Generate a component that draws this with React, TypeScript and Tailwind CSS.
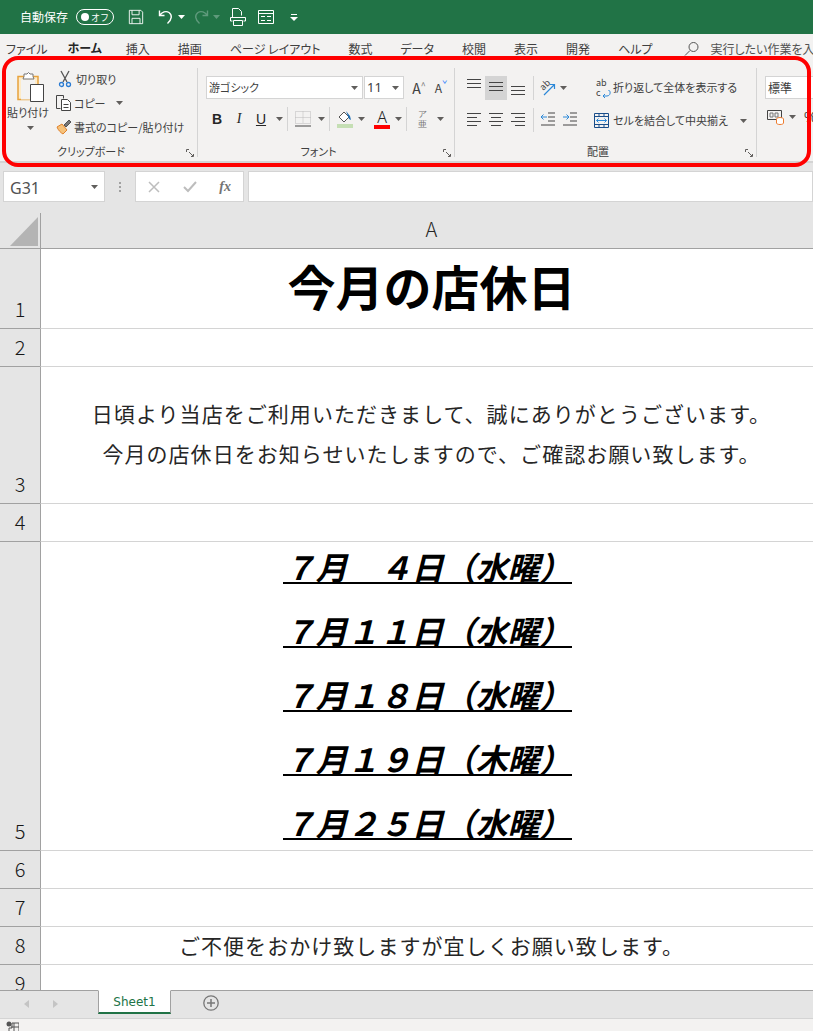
import type { ReactNode } from "react";

const tabs = ["描画", "ページ レイアウト", "数式", "データ", "校閲", "表示", "開発", "ヘルプ"];

const dates = [
  "７月　４日（水曜）",
  "７月１１日（水曜）",
  "７月１８日（水曜）",
  "７月１９日（木曜）",
  "７月２５日（水曜）",
];

function Caret({ color = "#605e5c" }: { color?: string }) {
  return (
    <svg width="7" height="4" viewBox="0 0 7 4" className="shrink-0">
      <path d="M0 0h7L3.500 4z" fill={color} />
    </svg>
  );
}

function Launcher() {
  return (
    <svg width="8" height="8" viewBox="0 0 8 8" className="absolute right-1 bottom-1" fill="none" stroke="#605e5c">
      <path d="M.5 3V.5H3M7.500 5v2.500H5M3 3l4 4" />
    </svg>
  );
}

function Sep() {
  return <div className="mx-1 h-6 w-px shrink-0 bg-neutral-300" />;
}

function Lines({ rows }: { rows: [number, number, number][] }) {
  return (
    <svg width="16" height="24" viewBox="0 0 16 24" stroke="#444" strokeWidth="1">
      {rows.map(([x1, x2, y]) => (
        <line key={y} x1={x1} x2={x2} y1={y + 0.5} y2={y + 0.5} />
      ))}
    </svg>
  );
}

function IconBtn({ active, children }: { active?: boolean; children: ReactNode }) {
  return (
    <div className={"flex h-6 w-5.5 shrink-0 items-center justify-center " + (active ? "bg-neutral-300" : "")}>{children}</div>
  );
}

function Group({ label, width, children }: { label: string; width: string; children: ReactNode }) {
  return (
    <div className={"relative flex h-full shrink-0 flex-col " + width}>
      <div className="min-h-0 flex-1">{children}</div>
      <div className="pr-4 pb-0.5 text-center leading-4 text-neutral-700">{label}</div>
      <Launcher />
      <div className="absolute top-2 right-0 bottom-1 w-px bg-neutral-300" />
    </div>
  );
}

function PasteIcon() {
  return (
    <svg width="28" height="30" viewBox="0 0 28 30" fill="none" className="ml-1.5">
      <path d="M1 4.500h20v23H1z" fill="#fdebc8" stroke="#e8a33d" strokeWidth="1.500" />
      <path d="M4 7.500h14v20H4z" fill="#f3f2f1" />
      <path d="M7 4.500V2h3l1.500-1.500L13 2h3v2.500l1 2.500H6z" fill="#fff" stroke="#777" />
      <path d="M13.500 12.500h13v17h-13z" fill="#fff" stroke="#444" />
    </svg>
  );
}

function Scissors() {
  return (
    <svg width="14" height="18" viewBox="0 0 14 18" fill="none">
      <path d="M3 1l6 11M11 1L5 12" stroke="#555" strokeWidth="1.300" />
      <circle cx="3.500" cy="14.500" r="2" stroke="#2b7cd3" strokeWidth="1.300" />
      <circle cx="10.500" cy="14.500" r="2" stroke="#2b7cd3" strokeWidth="1.300" />
    </svg>
  );
}

function CopyIcon() {
  return (
    <svg width="16" height="16" viewBox="0 0 16 16" fill="none" stroke="#444">
      <path d="M4.500 13.500h-4V.5h7v3" />
      <path d="M5.500 4.500h6l3 3v8h-9zM7.500 9.500h5M7.500 12.500h5" fill="#fff" />
    </svg>
  );
}

function PainterIcon() {
  return (
    <svg width="16" height="16" viewBox="0 0 16 16" fill="none">
      <path d="M1 8l5-3 5 6-4 4C5 14 2 11 1 8z" fill="#f6c27a" stroke="#e0822d" />
      <path d="M8 6l5-5 2 2-5 5z" fill="#777" stroke="#555" />
    </svg>
  );
}

function Row({ num, height, children }: { num: number; height: string; children?: ReactNode }) {
  return (
    <div className={"flex shrink-0 " + height}>
      <div className="flex w-10 shrink-0 items-end justify-center border-b border-neutral-400 bg-neutral-200 pb-px text-xl leading-9 font-light text-neutral-900">
        {num}
      </div>
      <div className="w-[782px] shrink-0 border-b border-l border-b-neutral-300 border-l-neutral-400 bg-white">{children}</div>
    </div>
  );
}

export default function App() {
  return (
    <div className="relative flex h-screen flex-col overflow-hidden bg-neutral-200 font-['Noto_Sans_CJK_JP','Noto_Sans',sans-serif]">
      {/* タイトルバー */}
      <div className="flex h-[34px] shrink-0 items-center bg-[#217346] pl-5 text-white">
        <span className="text-xs [font-feature-settings:'palt']">自動保存</span>
        <div className="ml-2 flex h-4 w-9.5 items-center justify-between rounded-full border border-white px-1">
          <div className="size-2 rounded-full bg-white" />
          <span className="text-[9px] leading-none">オフ</span>
        </div>
        <svg width="16" height="16" viewBox="0 0 18 18" fill="none" stroke="#fff" className="ml-3.5">
          <path d="M1.500 1.500h13l2 2v13h-15zM4.500 1.500v5h8v-5M4.500 16.500v-6h9v6" />
        </svg>
        <svg width="16" height="16" viewBox="0 0 16 16" fill="none" stroke="#fff" strokeWidth="1.400" className="ml-3.5">
          <path d="M1.500 1.500v5h5M1.500 6.500C4 3 8 1.500 11 3.500c3.500 2.500 3 7-1.500 11" />
        </svg>
        <div className="ml-1">
          <Caret color="#ffffff" />
        </div>
        <svg width="16" height="16" viewBox="0 0 16 16" fill="none" stroke="#5f9a7c" strokeWidth="1.400" className="ml-2">
          <path d="M14.500 1.500v5h-5M14.500 6.500C12 3 8 1.500 5 3.500c-3.500 2.500-3 7 1.500 11" />
        </svg>
        <div className="ml-1">
          <Caret color="#5f9a7c" />
        </div>
        <svg width="16" height="18" viewBox="0 0 16 18" fill="none" stroke="#fff" className="ml-2.5">
          <path d="M2.500 9V.5h6l3 3v4M2.500 13H.5V9.500h15V13h-2M3.500 12.500h9v5h-9z" />
        </svg>
        <svg width="16" height="14" viewBox="0 0 16 14" fill="none" stroke="#fff" className="ml-3">
          <path d="M.5.5h15v13H.5zM.5 3.500h15M3 6.500h4M9 6.500h4M3 10.500h4M9 10.500h4" />
        </svg>
        <svg width="8" height="7" viewBox="0 0 8 7" fill="#fff" className="ml-4">
          <path d="M1 0h6v1H1zM0 3h8L4 7z" />
        </svg>
      </div>

      {/* タブ */}
      <div className="flex h-[26px] shrink-0 items-center gap-7 bg-[#f3f2f1] pt-1 pl-1.5 text-xs whitespace-nowrap text-neutral-700 [font-feature-settings:'palt']">
        <span>ファイル</span>
        <span className="-mr-1 -ml-2 border-b-2 border-[#217346] font-bold text-neutral-800">ホーム</span>
        <span>挿入</span>
        {tabs.map((t) => (
          <span key={t}>{t}</span>
        ))}
        <div className="flex items-center gap-2.5 pl-1 text-neutral-600">
          <svg width="16" height="16" viewBox="0 0 16 16" fill="none" stroke="#555" className="shrink-0">
            <circle cx="9.500" cy="6" r="4.500" />
            <path d="M6 9.500L1 14.500" />
          </svg>
          <span>実行したい作業を入力してください</span>
        </div>
      </div>

      {/* リボン */}
      <div className="flex h-[103px] shrink-0 overflow-hidden border-b-2 border-neutral-300 bg-[#f3f2f1] text-[11px] text-neutral-700 [font-feature-settings:'palt']">
        <Group label="クリップボード" width="w-[198px]">
          <div className="flex pt-3">
            <div className="flex w-[52px] shrink-0 flex-col items-center pl-1">
              <PasteIcon />
              <span className="mt-0.5 leading-4">貼り付け</span>
              <div className="mt-1.5 ml-1">
                <Caret />
              </div>
            </div>
            <div className="-mt-0.5 flex flex-col gap-1.5 pl-1">
              <div className="flex h-[18px] items-center gap-1 pl-0.5 whitespace-nowrap">
                <Scissors />
                <span>切り取り</span>
              </div>
              <div className="flex h-[18px] items-center gap-0.5 whitespace-nowrap">
                <CopyIcon />
                <span>コピー</span>
                <div className="ml-2">
                  <Caret />
                </div>
              </div>
              <div className="flex h-[18px] items-center gap-0.5 whitespace-nowrap">
                <PainterIcon />
                <span>書式のコピー/貼り付け</span>
              </div>
            </div>
          </div>
        </Group>

        <Group label="フォント" width="w-[257px]">
          <div className="flex items-center pt-4 pl-2">
            <div className="flex h-[23px] w-[157px] items-center justify-between border border-neutral-300 bg-white pr-1 pl-0.5">
              <span>游ゴシック</span>
              <Caret />
            </div>
            <div className="ml-px flex h-[23px] w-10 items-center justify-between border border-neutral-300 bg-white pr-1 pl-0.5 font-['Noto_Sans'] text-[13px]">
              <span>11</span>
              <Caret />
            </div>
            <span className="ml-1 w-5.5 text-center text-sm leading-none">
              A<sup className="text-[9px] text-neutral-500">^</sup>
            </span>
            <span className="w-5.5 text-center text-xs leading-none">
              A<sup className="text-[9px] text-blue-500">ˇ</sup>
            </span>
          </div>
          <div className="mt-2 flex items-center pl-2 font-['Liberation_Sans'] text-sm text-neutral-800">
            <IconBtn>
              <span className="font-bold">B</span>
            </IconBtn>
            <IconBtn>
              <span className="font-['Liberation_Serif'] italic">I</span>
            </IconBtn>
            <IconBtn>
              <span className="underline">U</span>
            </IconBtn>
            <div className="pl-1">
              <Caret />
            </div>
            <Sep />
            <IconBtn>
              <svg width="16" height="16" viewBox="0 0 16 16" fill="none" stroke="#bbb" strokeDasharray="1 1">
                <path d="M.5.5h15v12H.5zM8 .5v12M.5 6.500h15" />
                <path d="M0 15h16" stroke="#444" strokeDasharray="none" />
              </svg>
            </IconBtn>
            <div className="pl-1">
              <Caret />
            </div>
            <Sep />
            <IconBtn>
              <svg width="16" height="18" viewBox="0 0 16 18">
                <path d="M2 7l5-5 5 5-5 5z" fill="#fff" stroke="#555" />
                <path d="M9 1l4 5 1 4-2-1z" fill="#1f6fb5" />
                <path d="M0 14h16v4H0z" fill="#c5dfb4" />
              </svg>
            </IconBtn>
            <div className="pl-0.5">
              <Caret />
            </div>
            <div className="w-1.5" />
            <div className="flex w-5.5 flex-col items-center">
              <span className="font-['Noto_Sans'] text-base leading-4 font-light">A</span>
              <div className="h-1 w-4 bg-[#ff0000]" />
            </div>
            <div className="pl-0.5">
              <Caret />
            </div>
            <Sep />
            <IconBtn>
              <div className="flex flex-col items-center text-[9px] leading-2.5 text-neutral-500">
                <span>ア</span>
                <span>亜</span>
              </div>
            </IconBtn>
            <div className="pl-1">
              <Caret />
            </div>
          </div>
        </Group>

        <Group label="配置" width="w-[302px]">
          <div className="flex pt-4">
            <div className="flex w-[132px] shrink-0 flex-col gap-2 pl-2">
              <div className="flex items-center">
                <IconBtn>
                  <Lines rows={[[1, 15, 3], [1, 15, 7], [1, 15, 11]]} />
                </IconBtn>
                <IconBtn active>
                  <Lines rows={[[1, 15, 6], [1, 15, 10], [1, 15, 14]]} />
                </IconBtn>
                <IconBtn>
                  <Lines rows={[[1, 15, 10], [1, 15, 14], [1, 15, 18]]} />
                </IconBtn>
                <Sep />
                <svg width="18" height="18" viewBox="0 0 18 18" fill="none" className="shrink-0">
                  <text x="2" y="10" fontSize="9" fill="#444" transform="rotate(-45 6 7)">ab</text>
                  <path d="M6 16L16 6M12 5.500h4.500V10" stroke="#2b88d8" strokeWidth="1.200" />
                </svg>
                <div className="pl-1">
                  <Caret />
                </div>
              </div>
              <div className="flex items-center">
                <IconBtn>
                  <Lines rows={[[1, 15, 5], [1, 11, 9], [1, 15, 13], [1, 11, 17]]} />
                </IconBtn>
                <IconBtn>
                  <Lines rows={[[1, 15, 5], [3, 13, 9], [1, 15, 13], [3, 13, 17]]} />
                </IconBtn>
                <IconBtn>
                  <Lines rows={[[1, 15, 5], [5, 15, 9], [1, 15, 13], [5, 15, 17]]} />
                </IconBtn>
                <Sep />
                <svg width="16" height="14" viewBox="0 0 16 14" fill="none" className="-mt-0.5 ml-0.5 shrink-0">
                  <path d="M8 1h7M8 5h7M8 9h7M1 13h14" stroke="#444" />
                  <path d="M7 5H1M3.500 2.500L1 5l2.500 2.500" stroke="#2b88d8" />
                </svg>
                <svg width="16" height="14" viewBox="0 0 16 14" fill="none" className="-mt-0.5 ml-1.5 shrink-0">
                  <path d="M8 1h7M8 5h7M8 9h7M1 13h14" stroke="#444" />
                  <path d="M1 5h6M4.500 2.500L7 5 4.500 7.500" stroke="#2b88d8" />
                </svg>
              </div>
            </div>
            <div className="ml-px flex flex-col gap-2.5 pl-2">
              <div className="flex h-[23px] items-center gap-0.5 whitespace-nowrap">
                <div className="relative flex w-[15px] flex-col text-[9px] leading-2.5 text-neutral-700">
                  <span>ab</span>
                  <span>c</span>
                  <svg width="10" height="8" viewBox="0 0 10 8" fill="none" stroke="#2b88d8" className="absolute right-0 bottom-0">
                    <path d="M7 0c3 0 3 6-1 6H2M4 4L2 6l2 2" />
                  </svg>
                </div>
                <span>折り返して全体を表示する</span>
              </div>
              <div className="-ml-0.5 flex h-[23px] items-center gap-1 whitespace-nowrap">
                <svg width="15" height="15" viewBox="0 0 15 15" fill="none" className="shrink-0">
                  <path d="M.5.5h14v14H.5zM.5 3.500h14M.5 11.500h14M5 .5v3M10 .5v3M5 11.500v3M10 11.500v3" stroke="#1a4e8a" />
                  <path d="M2.500 7.500h10M4.500 5.500l-2 2 2 2M10.500 5.500l2 2-2 2" stroke="#2b88d8" />
                </svg>
                <span>セルを結合して中央揃え</span>
                <div className="ml-2">
                  <Caret />
                </div>
              </div>
            </div>
          </div>
        </Group>

        <div className="flex flex-col gap-2 pt-4 pl-2">
          <div className="flex h-[23px] w-16 items-center border border-neutral-300 bg-white pl-0.5 text-xs">標準</div>
          <div className="flex items-center gap-1 pl-0.5">
            <svg width="18" height="15" viewBox="0 0 18 15" fill="none" className="shrink-0">
              <path d="M.5.5h14v9H.5z" stroke="#444" />
              <path d="M3 3h3v4H3zM8 3h3v4H8z" stroke="#777" />
              <ellipse cx="13" cy="9" rx="3.500" ry="1.500" fill="#fff" stroke="#ed7d31" />
              <path d="M9.500 9v4c0 2 7 2 7 0V9" fill="#fff" stroke="#ed7d31" />
            </svg>
            <Caret />
            <span className="pl-1 font-['Liberation_Sans'] text-sm">%</span>
          </div>
        </div>
      </div>

      {/* 数式バー */}
      <div className="flex h-[50px] shrink-0 items-start gap-1 bg-neutral-200 pt-2 pl-[3px]">
        <div className="flex h-[31px] w-[102px] shrink-0 items-center justify-between border border-neutral-300 bg-white px-1.5 font-['Noto_Sans'] text-base text-neutral-600">
          <span className="pt-0.5">G31</span>
          <Caret />
        </div>
        <div className="mx-2.5 flex h-[31px] shrink-0 flex-col items-center justify-center gap-0.5">
          <div className="size-0.5 bg-neutral-400" />
          <div className="size-0.5 bg-neutral-400" />
          <div className="size-0.5 bg-neutral-400" />
        </div>
        <div className="flex h-[31px] w-[109px] shrink-0 items-center justify-between border border-neutral-300 bg-white px-3">
          <svg width="12" height="12" viewBox="0 0 12 12" stroke="#bdbdbd" strokeWidth="1.500">
            <path d="M1 1l10 10M11 1L1 11" />
          </svg>
          <svg width="14" height="12" viewBox="0 0 14 12" fill="none" stroke="#bdbdbd" strokeWidth="2">
            <path d="M1 6l4 4 8-9" />
          </svg>
          <span className="font-['Liberation_Serif'] text-sm leading-none font-bold text-neutral-500 italic">fx</span>
        </div>
        <div className="h-[31px] flex-1 border border-neutral-300 bg-white" />
      </div>

      {/* シート */}
      <div className="flex min-h-0 flex-1 flex-col overflow-hidden">
        <div className="flex h-9 shrink-0 border-b border-neutral-400 bg-neutral-200">
          <div className="flex w-10 shrink-0 items-end justify-end pr-0.5 pb-0.5">
            <svg width="28" height="29" viewBox="0 0 28 29">
              <path d="M28 0v29H0z" fill="#b4b4b4" />
            </svg>
          </div>
          <div className="flex w-[782px] shrink-0 items-center justify-center border-l border-neutral-400 pb-1 text-xl font-light text-neutral-800">
            A
          </div>
        </div>

        <Row num={1} height="h-20">
          <div className="flex h-full items-center justify-center pb-2 text-5xl font-bold text-black">今月の店休日</div>
        </Row>
        <Row num={2} height="h-9.5" />
        <Row num={3} height="h-[137px]">
          <div className="flex h-full flex-col items-center justify-center pb-1 text-[21px] leading-10 tracking-wider text-neutral-800">
            <div>日頃より当店をご利用いただきまして、誠にありがとうございます。</div>
            <div>今月の店休日をお知らせいたしますので、ご確認お願い致します。</div>
          </div>
        </Row>
        <Row num={4} height="h-9.5" />
        <Row num={5} height="h-[309px]">
          <div className="flex flex-col items-center gap-7.5 pt-2 pr-2">
            {dates.map((d) => (
              <div key={d} className="border-b-2 border-black text-[32px] leading-8 font-bold text-black italic">
                {d}
              </div>
            ))}
          </div>
        </Row>
        <Row num={6} height="h-9.5" />
        <Row num={7} height="h-9.5" />
        <Row num={8} height="h-9.5">
          <div className="flex h-full items-center justify-center text-[21px] tracking-wider text-neutral-800">
            ご不便をおかけ致しますが宜しくお願い致します。
          </div>
        </Row>
        <Row num={9} height="h-9.5" />
      </div>

      {/* シートタブ */}
      <div className="flex h-7 shrink-0 items-start border-t border-neutral-400 bg-neutral-200">
        <div className="flex h-6.5 w-[98px] items-center gap-6 pl-6">
          <svg width="5" height="8" viewBox="0 0 5 8" fill="#c4c4c4">
            <path d="M5 0v8L0 4z" />
          </svg>
          <svg width="5" height="8" viewBox="0 0 5 8" fill="#c4c4c4">
            <path d="M0 0v8l5-4z" />
          </svg>
        </div>
        <div className="-mt-px flex h-6 w-[73px] items-center justify-center border-x border-t border-b-2 border-x-neutral-400 border-t-white border-b-[#217346] bg-white font-['DejaVu_Sans'] text-xs text-[#217346]">
          Sheet1
        </div>
        <svg width="16" height="16" viewBox="0 0 16 16" fill="none" stroke="#777" className="mt-1 ml-8">
          <circle cx="8" cy="8" r="7.200" strokeWidth="1.300" />
          <path d="M8 4v8M4 8h8" strokeWidth="1.500" />
        </svg>
      </div>

      {/* ステータスバー */}
      <div className="flex h-[13px] shrink-0 items-start border-t border-neutral-300 bg-[#f3f2f1] pt-0.5 pl-1.5">
        <svg width="13" height="11" viewBox="0 0 13 11" fill="none">
          <circle cx="3" cy="3" r="2.500" fill="#555" />
          <path d="M6 2h7v9H3V7h3zM5 6h8M8 2v9" stroke="#555" />
        </svg>
      </div>

      {/* 赤枠 */}
      <div className="pointer-events-none absolute top-14 left-0.5 h-[111px] w-[809px] rounded-2xl border-4 border-[#ff0000]" />
    </div>
  );
}
